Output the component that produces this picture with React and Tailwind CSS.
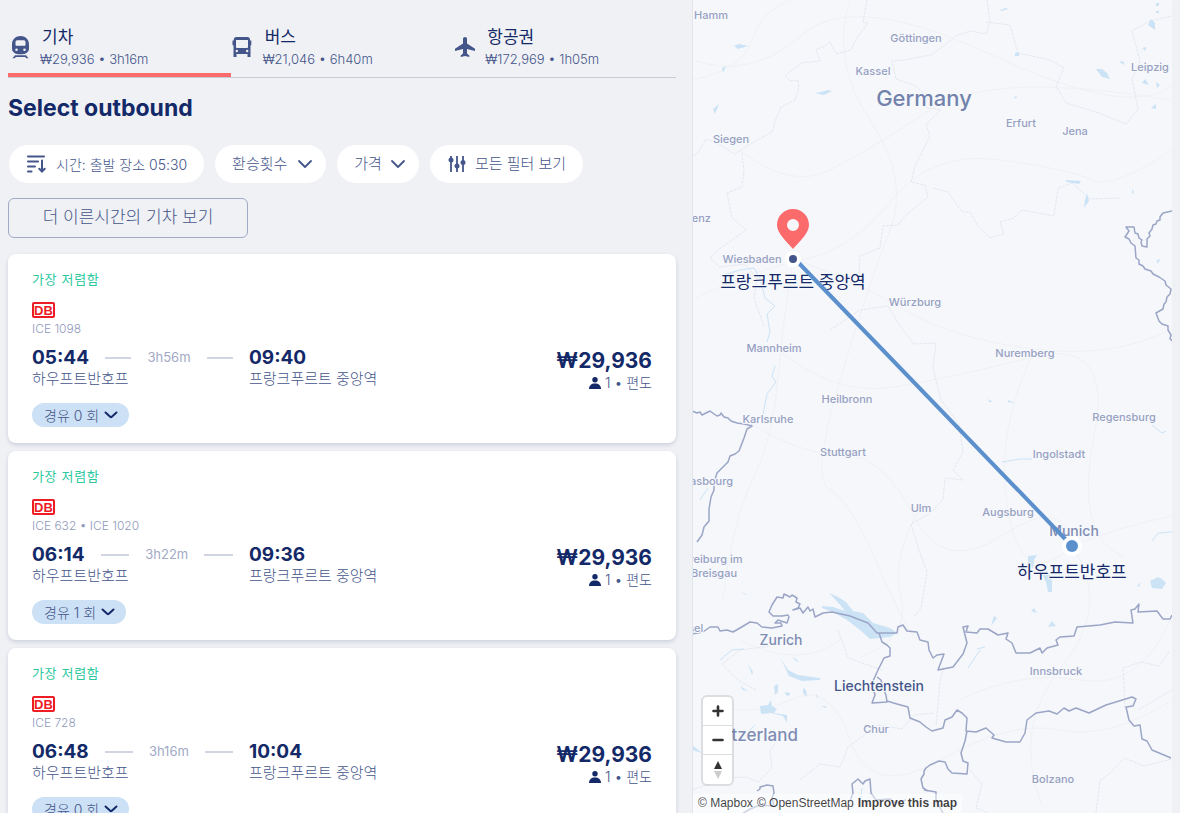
const FONT = "font-['Inter','Noto_Sans_CJK_KR',sans-serif]";

function TrainIcon() {
  return (
    <svg viewBox="0 0 24 24" className="size-6 shrink-0" fill="#44558a" aria-hidden="true">
      <path
        fillRule="evenodd"
        d="M12.500 1C8 1 4 4 4 9.500V13.500C4 17 7 19.300 12.500 19.300S21 17 21 13.500V9.500C21 4 17 1 12.500 1zM9.300 5.200h6.400c1.200 0 1.800.8 1.800 1.900v2.600c0 .6-.4 1-1 1H8.500c-.6 0-1-.4-1-1V7.100c0-1.100.6-1.900 1.800-1.900zM8.500 13.500a1.300 1.300 0 110 2.600 1.300 1.300 0 010-2.600zm8 0a1.300 1.300 0 110 2.600 1.300 1.300 0 010-2.600z"
      />
      <path d="M7 20.200h11l2.500 3h-2.200l-1.200-1.300H7.900l-1.200 1.300H4.500z" />
    </svg>
  );
}

function BusIcon() {
  return (
    <svg viewBox="0 0 24 24" className="size-6 shrink-0" fill="#44558a" aria-hidden="true">
      <path
        fillRule="evenodd"
        d="M5.500 2h10.800c1.800 0 2.700 1 2.700 2.700v.8h1.300v4.800H19.500V22h-3v-3H5.500v3H2.500V10.300H1.500V5.500h1.300v-.8C2.800 3 3.700 2 5.500 2zM5 5v7.200c0 .5.3.8.8.8h10.400c.5 0 .8-.3.8-.8V5zM5.800 14.800a1.200 1.200 0 100 2.400 1.200 1.200 0 000-2.400zm10.400 0a1.200 1.200 0 100 2.400 1.200 1.200 0 000-2.400z"
      />
    </svg>
  );
}

function PlaneIcon() {
  return (
    <svg viewBox="0 0 24 24" className="size-6 shrink-0" fill="#44558a" aria-hidden="true">
      <path d="M22 16v-2.300l-8-5.200V3.800C14 2.700 13 2 12 2s-2 .7-2 1.800v4.700l-8 5.200V16l8-2v4.500l-2.300 2V22l4.300-.9 4.300.9v-1.500l-2.300-2V14z" />
    </svg>
  );
}

function SortIcon() {
  return (
    <svg viewBox="0 0 20 20" className="size-5 shrink-0" fill="none" stroke="#44558a" strokeWidth="2" strokeLinecap="round" aria-hidden="true">
      <path d="M2 2.500h16M2 7.500h10M2 12.500h7M2 17.500h3.500M16 6.500v10.500M13.300 14.800l2.700 2.700 2.700-2.700" />
    </svg>
  );
}

function SlidersIcon() {
  return (
    <svg viewBox="0 0 20 20" className="size-5 shrink-0" stroke="#44558a" fill="#44558a" strokeWidth="1.800" aria-hidden="true">
      <path d="M4 2v16M10 2v16M16 2v16" />
      <circle cx="4" cy="6" r="1.600" />
      <circle cx="10" cy="12" r="1.600" />
      <circle cx="16" cy="8.500" r="1.600" />
    </svg>
  );
}

function Chevron({ bold }) {
  return (
    <svg viewBox="0 0 16 16" className="size-4 shrink-0" fill="none" aria-hidden="true">
      <path
        d={bold ? "M2.500 5.500l4.700 4.300q.8.7 1.600 0l4.700-4.300" : "M2 5l6 6 6-6"}
        stroke={bold ? "#132968" : "#44558a"}
        strokeWidth={bold ? 2 : 1.800}
        strokeLinecap="round"
        strokeLinejoin="round"
      />
    </svg>
  );
}

const TABS = [
  { name: "기차", info: "₩29,936 • 3h16m", Icon: TrainIcon, active: true },
  { name: "버스", info: "₩21,046 • 6h40m", Icon: BusIcon },
  { name: "항공권", info: "₩172,969 • 1h05m", Icon: PlaneIcon },
];

const TRIPS = [
  { trains: "ICE 1098", dep: "05:44", arr: "09:40", duration: "3h56m", stops: 0 },
  { trains: "ICE 632 • ICE 1020", dep: "06:14", arr: "09:36", duration: "3h22m", stops: 1 },
  { trains: "ICE 728", dep: "06:48", arr: "10:04", duration: "3h16m", stops: 0 },
];

function Tabs() {
  return (
    <div role="tablist" className="grid grid-cols-3 border-b border-[#c9cbd2]">
      {TABS.map(({ name, info, Icon, active }) => (
        <button
          key={name}
          type="button"
          role="tab"
          aria-selected={!!active}
          className={`flex h-[77px] items-start gap-2 border-b-4 pt-[26px] text-left ${active ? "border-[#fc6b6b]" : "border-transparent"}`}
        >
          <span className="pt-[9px]">
            <Icon />
          </span>
          <span className="flex flex-col">
            <span className="pl-0.5 text-[17px] leading-[22px] text-[#132968]">{name}</span>
            <span className="text-[13px] leading-[22px] font-light text-[#44558a]">{info}</span>
          </span>
        </button>
      ))}
    </div>
  );
}

const CHIP = "flex h-[38px] items-center rounded-full bg-white px-[17px] text-[#44558a] font-light";

function Filters() {
  return (
    <div className="flex flex-wrap gap-[11px] px-px">
      <button type="button" className={`${CHIP} gap-2.5 text-[14px]`}>
        <SortIcon />
        시간: 출발 장소 05:30
      </button>
      <button type="button" className={`${CHIP} gap-2.5 text-[15px]`}>
        환승횟수
        <span className="-mr-1"><Chevron /></span>
      </button>
      <button type="button" className={`${CHIP} gap-2 text-[15px]`}>
        가격
        <span className="-mr-1"><Chevron /></span>
      </button>
      <button type="button" className={`${CHIP} gap-2 text-[15px]`}>
        <SlidersIcon />
        모든 필터 보기
      </button>
    </div>
  );
}

function Trip({ trains, dep, arr, duration, stops }) {
  return (
    <li className="rounded-lg bg-white px-6 py-4 shadow-[0_2px_4px_rgba(19,41,104,0.16)]">
      <p className="text-[13px] leading-[18px] tracking-wider text-[#2cc99f]">가장 저렴함</p>
      <span className="mt-[14px] flex h-4 w-[23px] items-center justify-center rounded-[2px] border-2 border-[#ee1c25] font-['Liberation_Sans',sans-serif] text-[13px] leading-none font-bold text-[#ee1c25]">
        DB
      </span>
      <p className="mt-1 text-[12px] leading-[14px] font-light text-[#8f99bb]">{trains}</p>
      <div className="mt-[10px] flex justify-between">
        <div className="grid grid-cols-[217px_auto] content-start">
          <div className="flex h-6 items-center gap-4 pr-4">
            <span className="text-[19px] font-bold text-[#132968]">{dep}</span>
            <span className="h-0.5 flex-1 bg-[#d0d4e3]" />
            <span className="text-[13px] text-[#a1a9c6]">{duration}</span>
            <span className="h-0.5 flex-1 bg-[#d0d4e3]" />
          </div>
          <span className="flex h-6 items-center text-[19px] font-bold text-[#132968]">{arr}</span>
          <span className="text-[15px] leading-[18px] font-light text-[#44558a]">하우프트반호프</span>
          <span className="text-[15px] leading-[18px] font-light text-[#44558a]">프랑크푸르트 중앙역</span>
        </div>
        <div className="flex flex-col items-end">
          <span className="text-[21px] leading-[30px] font-bold text-[#132968]">₩29,936</span>
          <span className="flex items-center gap-1 text-[14px] leading-[14px] font-light text-[#44558a]">
            <svg viewBox="0 0 12 12" className="size-3" fill="#132968" aria-hidden="true">
              <circle cx="6" cy="2.800" r="2.700" />
              <path d="M0 12c0-3.500 2.300-5.500 6-5.500s6 2 6 5.500z" />
            </svg>
            1 • 편도
          </span>
        </div>
      </div>
      <button type="button" className="mt-[13px] flex h-6 items-center gap-1 rounded-full bg-[#cce1f5] pr-2.5 pl-3 text-[14px] font-light text-[#44558a]">
        경유 {stops} 회
        <Chevron bold />
      </button>
    </li>
  );
}

const BORDERS = [
  "M1172 211l-9 2-3 4v3l-3 1-1 3-3 1-1 4-3 4 1 3-3 3v8l-5-1-1-4 1-2-3-2-1-4-3-1-1-6h-8l3 4-4 6 4 2 2 4 4 3 1 12 3 2v4l4 2 2 3 6 2 2 3 6 3 6 4 1 4 5 4-1 5-3 3-1 5-2 2-1 5-7 4 3 8 3 3 6 2v4l3 5-1 4 4 3v4",
  "M692 411l5 2 3-1 2 3 4-2 4-2 4 3 3 2 3-1 1-2 3 4 4 1 3 3 6 2 7 1 8 2-5 3-3 9-5 13-4 3-5 2-2 6-5 5-6 6-3 10v7l-3 7-2 12v12l-5 6-2 8-5 7",
  "M692 634L703 632L710 627L718 627L720 631L727 630L733 632L740 628L750 622L757 623L762 627L772 628L782 626L781 623L775 623L778 620L787 623L789 617L788 615L782 616L773 616L769 612L772 605L777 597L783 598L784 594L790 597L792 595L797 598L796 602L800 604L798 608L793 610L800 608L803 613L808 607L810 611L813 609L815 617L823 613L832 612L850 616L868 623L877 633L897 633L898 627L903 625L907 631L917 632L920 640L928 642L929 650L933 658L937 655L944 654L941 662L938 670L953 667L963 654L967 643L963 627L968 626L966 632L977 633L980 629L988 629L998 635L1008 633L1006 639L1012 643L1016 653L1030 653L1040 648L1042 653L1047 648L1058 645L1056 640L1060 637L1074 636L1077 627L1100 625L1115 622L1133 623L1131 610L1135 609L1139 604L1138 612L1157 611L1163 619L1170 619L1172 615",
  "M879 633l3 9 5 3 3 3v8l-6 2-6 12-5 11v6l2 8-3 8 15-1-1-7-3-7-2-8-4-3M887 701l10 3 11 3 2 11 10 4 6 5 6 4 11-3 2-8 7-3 5-7 5 3 5 5-1 13 10 1 10-4 8 7-2 3 14 4h14l5-9 2-13 9-7 13-2 8 3 7-6 5 3 7-3 13 5 17-8 26-8 4 2-3 7-7 1 3 13 5 6 6-1 2 14 5 2 5 9 19 8",
  "M967 731l-2 10-4 12 2 8 5 2-1 11-15-1-4-4-3-7-6-1-9 4-4 3-2 3v3l-3 5 2 9 5 3M850 801l3-8-1-9 6-5 5 5 2-3 5-2 1 14 5 7 14-1 6 4 10-3M757 791l3-2v-2l7-2 6 1 1 7-2 5 2 8-14-1-10 4-8 5M924 790l12 2v8l7 13",
];

const REGION_LINES = [
  "M867 0l-4 22 5 1-12 16-5 11-15 4-6-12-7 5-7 2 4 12-19 2-16 13 5 5 8-1 1 8-4 12-14 7-5 12-4 13-22 12-15 10-20-12-9-3-8 14-6 4",
  "M742 153l2 18-2 16-15 6 5 25 14 12-28 20-8 8 10 9 25-3 12 14-3 20 10 28",
  "M987 0l3 22-4 12-15-3-14 4-12 10-14 10-27 5-12 1 4 18 18 6 14 12-3 10 16 3-15 14 4 12-15 30-4 16 14 3 3 12-22 18-8 10-15 1-3 22-20 8-1 20-24 0",
  "M933 188l15 4 14 20 8 0 8 14 12 12 14-4-4-12 14-4 8-8 32 6 4-28 14-5 18 16 30-1",
  "M986 22l24 3 8 28 32 7 14 8-8 18 10 17 30 9 30 12 12-15-6-30 8-18-8-30 18-10 22-5",
  "M830 330l30-20 28-4 12 20 14 18 22-1-3 25 8 32 18 24 4 28-10 18 10 10-18-2-2 22-14 14-18 10 8 26 8 22-6 36-6 8",
  "M800 780l20-16 20 3 8-20 30-22 24 4 12-14 20-2M692 790l34-12 20-1 12 5 14-14-2-18 14-18M756 690l-18-10-16-16 18-14 30-4M838 630l10 28 34 12",
  "M944 667l-4 14-4 45M1125 708l-2-40 18-6 18 4 10-14M1172 690l-34 20M1096 813l4-32 10-8 14-15 20 8 28-7M970 770l12 14-6 24 12 5",
];

const ROADS = [
  "M692 80q50-10 60-40T790 0M692 60q60 20 110-25t190 20 180 30M740 150q50 40 90 20t100-60 240-10M692 300q60-30 110-40t90-60 110-40 90 20 80-30",
  "M793 259q-10 60-15 120t-25 100-30 120M793 259q60 20 110 50t130 40 139-20M774 347q60 50 120 40t140-30 60 80 30 120M753 425q50 30 90 30t70 60 90 20 70 10",
  "M1034 352q-40 80-26 160t64 34M921 507q-30 50-20 90t-40 60M1072 546q40 60-10 120t-20 140M1072 546q50-20 100-30M740 640q60 30 100 0M960 700q60-30 120-20t90-60",
  "M850 0q-20 60 20 120t20 110-50 150-10 110 50 80 40 70M700 700q50 20 90 0t60 40 90 20 120-30 112-30",
];

const LAKES = [
  "M829 593l9 4 8 5 7 9 10 2 10 10 17 5 7 5-7 4-20 2-10-9-13-10-14-8-11-4v-2l11 1 12 4-4-5-8-9z",
  "M781 659l7 11 10 5 22 3v2l-18 1-13-5z",
  "M760 706l8-1 3-5 1 6 5 3-3 4 13 2v8l-4-7-12-3-10 1z",
  "M774 686l4-2v8l-3 3z",
  "M785 692l5 1-1 3-3-1z",
  "M803 688l3 2 1 7-4-4z",
  "M740 686l8 5-5-1zM748 664l5 8-1 3z",
  "M792 657l4 2 3 3-3-1zM740 591l6 3v1zM815 694l2 1 1 4zM821 706h5v2z",
  "M692 745l10 8-10-3z",
  "M1028 556l9-1-3 5-1 8-5-5zM1044 569l5 4 3 8v11h-4l-2-10-3-6z",
  "M1150 581l8-4 4 2 4 4-4 6-10-1zM1137 586l4-4-2 5z",
  "M1031 611l3-3 3 5zM1048 627l4-6 4 5zM991 626l3-10 3 2zM1088 603l3 7zM1086 638l2 10z",
  "M734 46l5-2 9 2-10 3zM815 93l6-1 7-2 4 1-8 4zM713 109l6-5-4 10zM722 68l4-2-3 7zM999 11l6-3 4 1-8 2z",
  "M1096 69h6l5 4 3 6-8-2zM1148 25l3-6 4 4v7zM1119 62l4-1 2 4zM1142 48l4-1v4zM1156 3h3v3h-3zM1156 11h3v2h-3zM1142 83l3-4 4 6zM1156 82l4 3-3 3zM1151 108l5-4v5z",
  "M1065 180l16 1-2 3-12-2zM1087 193l2 8-5 7 1-8zM1015 53l4-1v4h-4zM1014 97l3-1-1 3zM1132 189l2 3-2 2zM1079 43l7 2z",
  "M988 399l5 3h-4zM1008 400l7 3-7-1zM1157 260l4-1-4 5z",
];

const RIVERS = [
  "M720 276l20-6 14-2 6 10 5 20 10 8-8 8 3 18-3 10M775 366l-3 10 4 6-9 12-4 20-12 11M1002 462l18-3h12M1152 541l6-8 14-1M1152 425l10 8 4-2M700 500l8-12M980 650l-12 18M977 649l8-2M720 660l12-10 12-1M750 730l5-5M860 803l2-15",
];

const CITY_LABELS = [
  ["Hamm", 711, 19], ["Göttingen", 916, 42], ["Kassel", 873, 75], ["Leipzig", 1150, 71],
  ["Erfurt", 1021, 127], ["Jena", 1075, 135], ["Siegen", 731, 143], ["lenz", 700, 222],
  ["Wiesbaden", 752, 263], ["Würzburg", 915, 306], ["Mannheim", 774, 352], ["Nuremberg", 1025, 357],
  ["Heilbronn", 847, 403], ["Karlsruhe", 768, 423], ["Regensburg", 1124, 421], ["Stuttgart", 843, 456],
  ["Ingolstadt", 1059, 458], ["Strasbourg", 704, 485], ["Ulm", 921, 512], ["Augsburg", 1008, 516],
  ["Freiburg im", 713, 563], ["Breisgau", 714, 577], ["Innsbruck", 1056, 675], ["Chur", 876, 733],
  ["Bolzano", 1053, 783], ["Basel", 689, 632],
];

function MapPanel() {
  return (
    <section aria-label="지도" className="relative h-full overflow-hidden border-l border-[#e4e5ea] bg-[#f5f7fb]">
      <svg viewBox="693 0 479 813" preserveAspectRatio="xMinYMin slice" className="block size-full">
        <g fill="none" stroke="#f0f1f5" strokeWidth="1">
          {ROADS.map((d) => <path key={d} d={d} />)}
        </g>
        <g fill="none" stroke="#e4e7ee" strokeWidth="1" strokeDasharray="3 1">
          {REGION_LINES.map((d) => <path key={d} d={d} />)}
        </g>
        <g fill="#cce3f6">
          {LAKES.map((d) => <path key={d} d={d} />)}
        </g>
        <g fill="none" stroke="#cce3f6" strokeWidth="1">
          {RIVERS.map((d) => <path key={d} d={d} />)}
        </g>
        <g fill="none" stroke="#9ba5c6" strokeWidth="1.500" strokeLinejoin="round">
          {BORDERS.map((d) => <path key={d} d={d} />)}
        </g>
        <g textAnchor="middle" stroke="#f7f9fc" strokeWidth="2" strokeLinejoin="round" className="[paint-order:stroke] font-medium">
          <g className="text-[11px]" fill="#96a0c2">
            {CITY_LABELS.map(([name, x, y]) => <text key={name} x={x} y={y}>{name}</text>)}
          </g>
          <g className="text-[14px]" fill="#7f8cb3">
            <text x="781" y="645">Zurich</text>
            <text x="1074" y="536">Munich</text>
          </g>
          <text x="879" y="691" fill="#44558a" className="text-[14px]">Liechtenstein</text>
          <text x="798" y="741" textAnchor="end" fill="#7f8cb3" className="text-[17px]">Switzerland</text>
          <text x="924" y="106" fill="#7282ac" className="text-[22px]">Germany</text>
          <g className="text-[17px] font-normal" fill="#132968">
            <text x="793" y="288">프랑크푸르트 중앙역</text>
            <text x="1072" y="578">하우프트반호프</text>
          </g>
        </g>
        <path d="M793 257l279 289" stroke="#5b90cd" strokeWidth="4" />
        <circle cx="793" cy="259" r="8" fill="#fff" />
        <circle cx="793" cy="259" r="4" fill="#44558a" />
        <circle cx="1072" cy="546" r="10" fill="#fff" />
        <circle cx="1072" cy="546" r="6" fill="#5b90cd" />
        <path fillRule="evenodd" fill="#fc6b6b" d="M793 209c9 0 16 7 16 16 0 8-9 16-16 24-7-8-16-16-16-24 0-9 7-16 16-16zm0 10a6 6 0 100 12 6 6 0 000-12z" />
      </svg>
      <div className="absolute bottom-[29px] left-[10px] flex w-[29px] flex-col divide-y divide-[#dddddd] rounded bg-white shadow-[0_0_0_2px_rgba(0,0,0,0.1)]">
        <button type="button" aria-label="Zoom in" className="flex h-[29px] items-center justify-center">
          <svg viewBox="0 0 12 12" className="size-3" stroke="#333" strokeWidth="2.600" strokeLinecap="round" aria-hidden="true"><path d="M6 1.500v9M1.500 6h9" /></svg>
        </button>
        <button type="button" aria-label="Zoom out" className="flex h-[29px] items-center justify-center">
          <svg viewBox="0 0 12 12" className="size-3" stroke="#333" strokeWidth="2.600" strokeLinecap="round" aria-hidden="true"><path d="M1.500 6h9" /></svg>
        </button>
        <button type="button" aria-label="Reset bearing to north" className="flex h-[29px] items-center justify-center">
          <svg viewBox="0 0 10 18" className="h-[18px] w-[10px]" aria-hidden="true"><path fill="#333" d="M5 0l4 8H1z" /><path fill="#ccc" d="M5 18l4-8H1z" /></svg>
        </button>
      </div>
      <div className="absolute bottom-0 left-0 flex gap-1 bg-white/50 px-[5px] font-['Liberation_Sans',sans-serif] text-[12px] leading-[19px] text-black/75">
        <a href="#mapbox">© Mapbox</a>
        <a href="#osm">© OpenStreetMap</a>
        <a href="#improve" className="font-bold">Improve this map</a>
      </div>
    </section>
  );
}

export default function App() {
  return (
    <main className={`grid h-screen grid-cols-[668fr_480fr] gap-4 overflow-hidden bg-[#f0f1f5] px-2 ${FONT}`}>
      <div className="-mx-2 min-w-0 overflow-y-auto px-2 [scrollbar-width:none]">
        <Tabs />
        <h1 className="mt-3.5 text-[23px] leading-8 font-bold text-[#132968]">Select outbound</h1>
        <div className="mt-[21px]">
          <Filters />
        </div>
        <button type="button" className="mt-[15px] flex h-10 w-60 items-center justify-center rounded-md border border-[#a1a9c6] text-[17px] font-light text-[#44558a]">
          더 이른시간의 기차 보기
        </button>
        <ul className="mt-4 flex flex-col gap-2 pb-4">
          {TRIPS.map((trip) => <Trip key={trip.dep} {...trip} />)}
        </ul>
      </div>
      <MapPanel />
    </main>
  );
}
